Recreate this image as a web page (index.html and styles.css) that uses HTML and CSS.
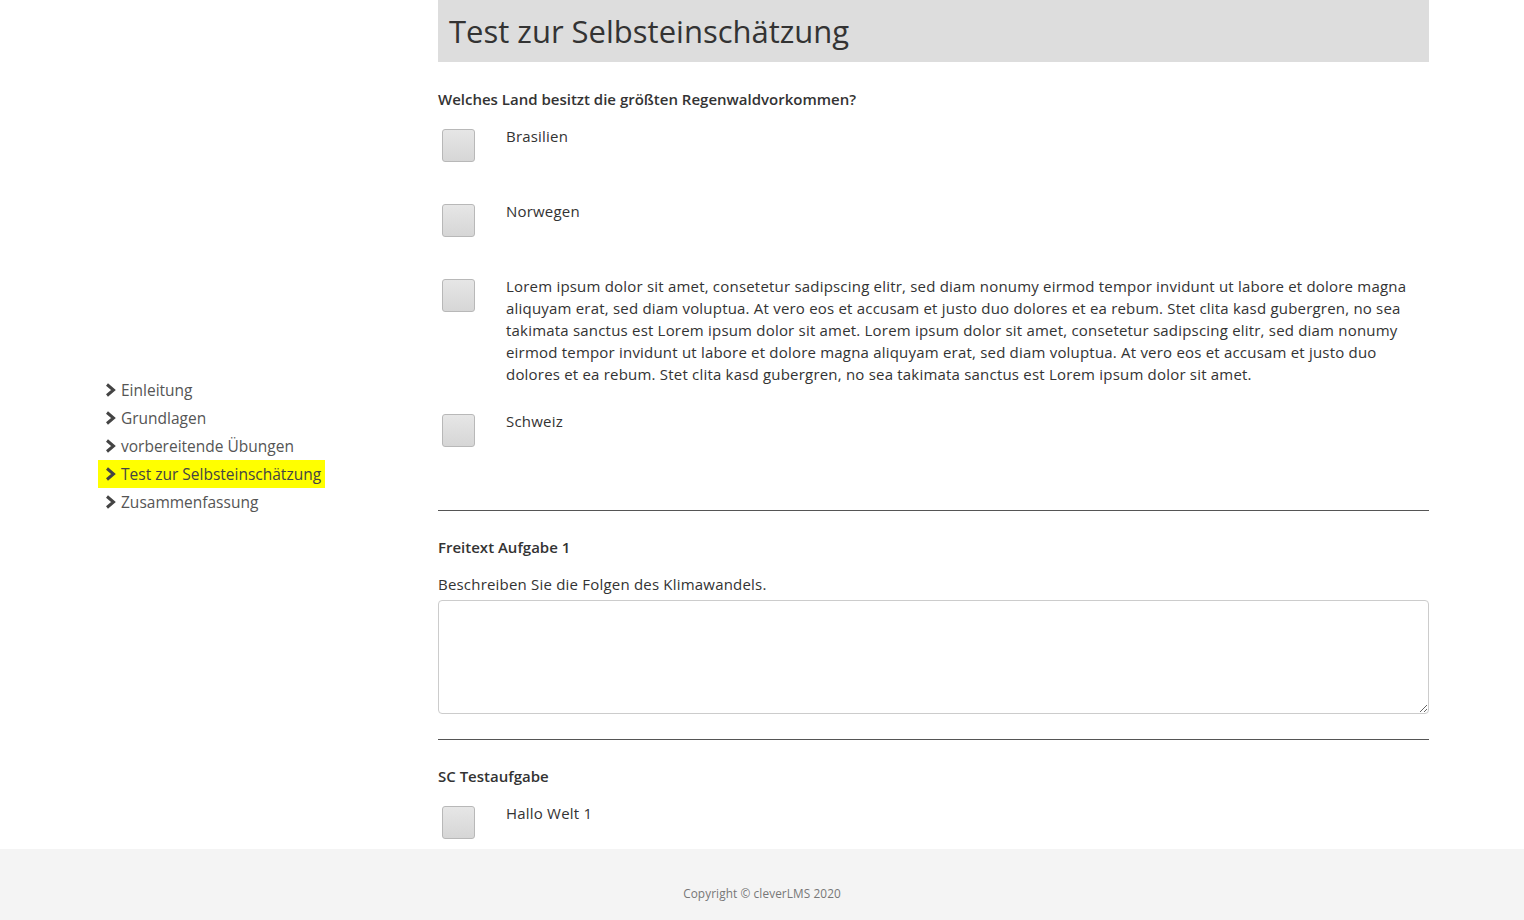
FILE: index.html
```html
<!DOCTYPE html>
<html lang="de">
<head>
    <meta charset="UTF-8">
    <meta name="viewport" content="width=device-width, initial-scale=1.0">
    <title>Test zur Selbsteinschätzung</title>
    <link rel="stylesheet" href="styles.css">
</head>
<body>
    <div class="page">
        <aside class="sidebar">
            <ul class="nav">
                <li><a class="nav-item" href="#"><svg class="chev" viewBox="0 0 11 14"><path d="M2 1.5 L8.5 7 L2 12.5" /></svg>Einleitung</a></li>
                <li><a class="nav-item" href="#"><svg class="chev" viewBox="0 0 11 14"><path d="M2 1.5 L8.5 7 L2 12.5" /></svg>Grundlagen</a></li>
                <li><a class="nav-item" href="#"><svg class="chev" viewBox="0 0 11 14"><path d="M2 1.5 L8.5 7 L2 12.5" /></svg>vorbereitende Übungen</a></li>
                <li><a class="nav-item active" href="#"><svg class="chev" viewBox="0 0 11 14"><path d="M2 1.5 L8.5 7 L2 12.5" /></svg>Test zur Selbsteinschätzung</a></li>
                <li><a class="nav-item" href="#"><svg class="chev" viewBox="0 0 11 14"><path d="M2 1.5 L8.5 7 L2 12.5" /></svg>Zusammenfassung</a></li>
            </ul>
        </aside>

        <main class="content">
            <h1 class="page-title">Test zur Selbsteinschätzung</h1>

            <section class="task">
                <h2 class="task-title">Welches Land besitzt die größten Regenwaldvorkommen?</h2>
                <div class="option">
                    <span class="box"></span>
                    <p class="option-text">Brasilien</p>
                </div>
                <div class="option">
                    <span class="box"></span>
                    <p class="option-text">Norwegen</p>
                </div>
                <div class="option">
                    <span class="box"></span>
                    <p class="option-text">Lorem ipsum dolor sit amet, consetetur sadipscing elitr, sed diam nonumy eirmod tempor invidunt ut labore et dolore magna aliquyam erat, sed diam voluptua. At vero eos et accusam et justo duo dolores et ea rebum. Stet clita kasd gubergren, no sea takimata sanctus est Lorem ipsum dolor sit amet. Lorem ipsum dolor sit amet, consetetur sadipscing elitr, sed diam nonumy eirmod tempor invidunt ut labore et dolore magna aliquyam erat, sed diam voluptua. At vero eos et accusam et justo duo dolores et ea rebum. Stet clita kasd gubergren, no sea takimata sanctus est Lorem ipsum dolor sit amet.</p>
                </div>
                <div class="option">
                    <span class="box"></span>
                    <p class="option-text">Schweiz</p>
                </div>
            </section>

            <hr class="divider">

            <section class="task">
                <h2 class="task-title">Freitext Aufgabe 1</h2>
                <p class="task-desc">Beschreiben Sie die Folgen des Klimawandels.</p>
                <textarea class="answer"></textarea>
            </section>

            <hr class="divider divider-tight">

            <section class="task">
                <h2 class="task-title">SC Testaufgabe</h2>
                <div class="option">
                    <span class="box"></span>
                    <p class="option-text">Hallo Welt 1</p>
                </div>
                <div class="option">
                    <span class="box"></span>
                    <p class="option-text">Hallo Welt 2</p>
                </div>
            </section>
        </main>
    </div>

    <footer class="footer">Copyright © cleverLMS 2020</footer>
</body>
</html>
```

FILE: styles.css
```css
body {
    margin: 0;
    font-family: "Open Sans", "Noto Sans", sans-serif;
    font-size: 15px;
    letter-spacing: 0.2px;
    color: #333;
    background: #fff;
}

.page {
    display: grid;
    grid-template-columns: 438px 991px;
}

.sidebar {
    padding: 376px 0 0 98px;
}

.nav {
    list-style: none;
    margin: 0;
    padding: 0;
}

.nav-item {
    display: inline-flex;
    align-items: center;
    height: 28px;
    padding: 0 4px 0 7px;
    color: #555;
    font-size: 15.5px;
    letter-spacing: 0;
    text-decoration: none;
}

.nav-item.active {
    background-color: #ffff00;
    color: #444;
}

.chev {
    width: 11px;
    height: 14px;
    margin-right: 5px;
    fill: none;
    stroke: #444;
    stroke-width: 3;
}

.content {
    padding-bottom: 120px;
}

.page-title {
    margin: 0;
    height: 62px;
    line-height: 62px;
    padding-left: 11px;
    background-color: #ddd;
    font-size: 31px;
    font-weight: 400;
    letter-spacing: 0;
    color: #333;
}

.task {
    padding-top: 26px;
}

.divider + .task {
    padding-top: 25px;
}

.task-title {
    margin: 0 0 15px;
    font-size: 15px;
    line-height: 22px;
    font-weight: 600;
    letter-spacing: 0;
    color: #333;
}

.option {
    display: flex;
    align-items: flex-start;
    min-height: 50px;
    margin-bottom: 25px;
}

.box {
    flex: none;
    width: 31px;
    height: 31px;
    margin: 4px 31px 0 4px;
    border: 1px solid #b8b8b8;
    border-radius: 3px;
    background: linear-gradient(#e6e6e6, #d6d6d6);
}

.option-text {
    margin: 0;
    line-height: 22px;
}

.divider {
    margin: 50px 0 0;
    border: none;
    border-top: 1px solid #555;
}

.divider-tight {
    margin-top: 0;
}

.task-desc {
    margin: 0 0 5px;
    line-height: 22px;
}

.answer {
    display: block;
    box-sizing: border-box;
    width: 100%;
    height: 114px;
    margin-bottom: 25px;
    border: 1px solid #ccc;
    border-radius: 4px;
}

.footer {
    position: fixed;
    left: 0;
    right: 0;
    bottom: 0;
    height: 71px;
    line-height: 88px;
    background-color: #f4f4f4;
    text-align: center;
    font-size: 11.8px;
    letter-spacing: 0.1px;
    color: #777;
}
```
